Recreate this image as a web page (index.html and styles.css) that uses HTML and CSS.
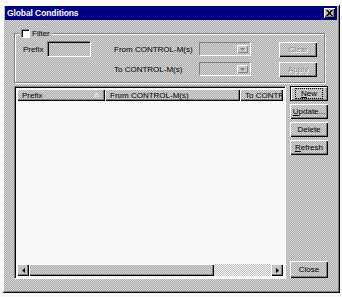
FILE: index.html
```html
<!DOCTYPE html>
<html lang="en">
<head>
  <meta charset="UTF-8">
  <title>Global Conditions</title>
  <link rel="stylesheet" href="styles.css">
</head>
<body>
  <div class="dialog">
    <div class="titlebar">
      <span class="title">Global Conditions</span>
      <span class="close-x">
        <svg width="7" height="6" viewBox="0 0 7 6"><path d="M0 0h2l1.5 2L5 0h2L4.5 3 7 6H5L3.5 4 2 6H0l2.5-3z" fill="#000"/></svg>
      </span>
    </div>

    <div class="groupbox">
      <div class="legend"><span class="check"></span>Filter</div>
      <div class="filter-grid">
        <span class="lbl c1">Prefix</span>
        <span class="textbox c2"></span>
        <span class="lbl c4">From CONTROL-M(s)</span>
        <span class="combo c5"><span class="drop"><svg width="5" height="3" viewBox="0 0 5 3"><path d="M0 0h5L2.5 3z" fill="#808080"/></svg></span></span>
        <button class="btn disabled c7">Clear</button>

        <span class="lbl c4 r2">To CONTROL-M(s)</span>
        <span class="combo c5 r2"><span class="drop"><svg width="5" height="3" viewBox="0 0 5 3"><path d="M0 0h5L2.5 3z" fill="#808080"/></svg></span></span>
        <button class="btn disabled c7 r2">Apply</button>
      </div>
    </div>

    <div class="main">
      <div class="list">
        <div class="list-head">
          <span class="col col-prefix">Prefix<svg class="sort" width="5" height="4" viewBox="0 0 5 4"><path d="M2.5 0L5 4H0z" fill="none" stroke="#fff" stroke-width="0.8"/></svg></span>
          <span class="col col-from">From CONTROL-M(s)</span>
          <span class="col col-to">To CONTR</span>
        </div>
        <div class="list-body"></div>
        <div class="hscroll">
          <span class="arrow"><svg width="3" height="5" viewBox="0 0 3 5"><path d="M3 0v5L0 2.5z" fill="#000"/></svg></span>
          <span class="thumb"></span>
          <span class="track"></span>
          <span class="arrow"><svg width="3" height="5" viewBox="0 0 3 5"><path d="M0 0v5l3-2.5z" fill="#000"/></svg></span>
        </div>
      </div>

      <div class="actions">
        <button class="btn default"><span class="focus"><u>N</u>ew</span></button>
        <button class="btn"><u>U</u>pdate...</button>
        <button class="btn">Delete</button>
        <button class="btn"><u>R</u>efresh</button>
        <button class="btn close-btn">Close</button>
      </div>
    </div>
  </div>
</body>
</html>
```

FILE: styles.css
```css
body { margin: 0; background: #fafafa; font-family: "Liberation Sans", Arial, sans-serif; font-size: 8px; color: #000; }

.dialog {
  box-sizing: border-box; width: 337px; height: 288px; margin: 5px 0 0 3px;
  display: flex; flex-direction: column; padding: 1px;
  background: repeating-conic-gradient(#acacac 0 25%, #d6d6d6 0 50%) 0 0 / 2px 2px;
  border-bottom: 1px solid #000; border-right: 1px solid #000;
  box-shadow: inset 1px 1px 0 #fff, inset -1px -1px 0 #808080;
}

.titlebar { height: 14px; margin: 0 1px 0 1px; background: #000080; display: flex; align-items: center; justify-content: space-between; padding: 0 2px 0 2px; }
.title { color: #fff; font-weight: bold; font-size: 8.5px; letter-spacing: -0.1px; }
.close-x { width: 11px; height: 10px; background: #c0c0c0; display: flex; align-items: center; justify-content: center;
  box-shadow: inset 1px 1px 0 #fff, inset -1px -1px 0 #000, inset -2px -2px 0 #808080; }

.groupbox { position: relative; box-sizing: border-box; width: 311px; height: 50px; margin: 13px 0 0 10px;
  border: 1px solid #808080; box-shadow: inset 1px 1px 0 #fff, 1px 1px 0 #fff; padding: 7px 0 0 8px; }
.legend { position: absolute; top: -5px; left: 5px; display: flex; align-items: center; gap: 2px; padding: 0 2px 0 1px;
  background: #c0c0c0; color: #000; line-height: 9px; }
.check { width: 7px; height: 7px; background: #fff; border-top: 1px solid #808080; border-left: 1px solid #808080;
  border-right: 1px solid #fff; border-bottom: 1px solid #fff; box-shadow: inset 1px 1px 0 #000; }

.filter-grid { display: grid; grid-template-columns: 24px 44px 23px 85px 52px 28px 38px; grid-template-rows: 16px 16px; row-gap: 4px; align-items: center; }
.c1 { grid-column: 1; } .c2 { grid-column: 2; } .c4 { grid-column: 4; } .c5 { grid-column: 5; } .c7 { grid-column: 7; }
.r2 { grid-row: 2; }
.lbl { white-space: nowrap; }
.textbox { box-sizing: border-box; height: 16px; border-top: 1px solid #808080; border-left: 1px solid #808080;
  border-right: 1px solid #fff; border-bottom: 1px solid #fff; box-shadow: inset 1px 1px 0 #000; }
.combo { box-sizing: border-box; height: 14px; display: flex; justify-content: flex-end; align-items: stretch; padding: 2px;
  border-top: 1px solid #808080; border-left: 1px solid #808080; border-right: 1px solid #fff; border-bottom: 1px solid #fff; }
.drop { width: 11px; background: #c8c8c8; display: flex; align-items: center; justify-content: center;
  box-shadow: inset 1px 1px 0 #fff, inset -1px -1px 0 #808080; }

.btn { box-sizing: border-box; height: 15px; padding: 0; border: none; font: inherit; color: #000;
  background: repeating-conic-gradient(#acacac 0 25%, #d6d6d6 0 50%) 0 0 / 2px 2px;
  box-shadow: inset 1px 1px 0 #fff, inset -1px -1px 0 #000, inset -2px -2px 0 #808080; }
.btn.disabled { color: #8a8a8a; text-shadow: 1px 1px 0 #fff; }
.btn.default { box-shadow: inset 0 0 0 1px #000, inset 2px 2px 0 #fff, inset -2px -2px 0 #808080; }
.focus { outline: 1px dotted #000; padding: 0 5px; }

.main { display: flex; gap: 4px; margin: 3px 0 0 10px; height: 193px; }
.list { box-sizing: border-box; width: 272px; display: flex; flex-direction: column; padding: 2px;
  border-top: 1px solid #808080; border-left: 1px solid #808080; border-right: 1px solid #fff; border-bottom: 1px solid #fff;
  box-shadow: inset 1px 1px 0 #000; background: #f8f8f8; }
.list-head { display: flex; height: 12px; flex: none; }
.col { box-sizing: border-box; display: flex; align-items: center; padding-left: 5px; white-space: nowrap; overflow: hidden;
  background: repeating-conic-gradient(#acacac 0 25%, #d6d6d6 0 50%) 0 0 / 2px 2px;
  box-shadow: inset 1px 1px 0 #fff, inset -1px -1px 0 #000, inset -2px -2px 0 #808080; }
.col-prefix { width: 88px; justify-content: space-between; padding-right: 6px; }
.col-from { width: 135px; }
.col-to { flex: 1; }
.list-body { flex: 1; }
.hscroll { display: flex; height: 12px; flex: none; }
.arrow { width: 12px; display: flex; align-items: center; justify-content: center;
  background: #c4c4c4; box-shadow: inset 1px 1px 0 #fff, inset -1px -1px 0 #000, inset -2px -2px 0 #808080; }
.thumb { width: 185px;
  background: repeating-conic-gradient(#acacac 0 25%, #d6d6d6 0 50%) 0 0 / 2px 2px;
  box-shadow: inset 1px 1px 0 #fff, inset -1px -1px 0 #000, inset -2px -2px 0 #808080; }
.track { flex: 1; background: repeating-conic-gradient(#c0c0c0 0 25%, #f4f4f4 0 50%) 0 0 / 2px 2px; }

.actions { width: 38px; display: flex; flex-direction: column; gap: 3px; }
.close-btn { margin-top: auto; height: 17px; margin-bottom: 1px; }
```
